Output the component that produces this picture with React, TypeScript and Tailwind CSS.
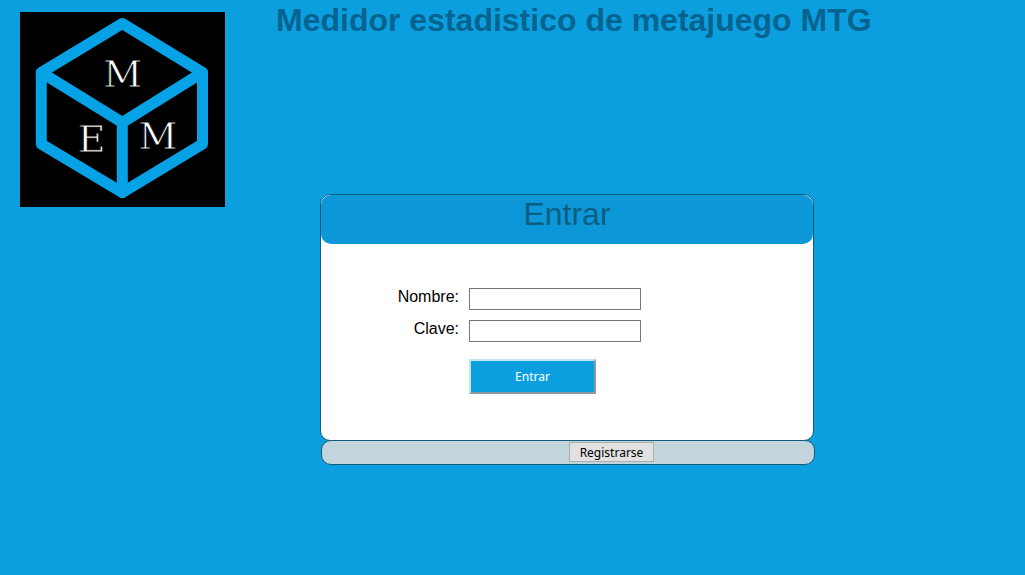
import React from "react";

function Logo() {
  return (
    <svg
      className="h-[195px] w-[205px] shrink-0 bg-black"
      viewBox="0 0 205 195"
      role="img"
      aria-label="MEM"
    >
      <g fill="none" stroke="#06a2e6" strokeWidth="11" strokeLinejoin="round" strokeLinecap="round">
        <path d="M102.3 11.5 182.5 60.5V132L102.3 180.5 21.3 132V60.5Z" />
        <path d="M21.3 60.5 102.3 110.5 182.5 60.5M102.3 110.5V180.5" />
      </g>
      <g
        fill="#ffffff"
        stroke="#000000"
        strokeWidth="0.8"
        fontSize="38"
        textAnchor="middle"
        className="font-['DejaVu_Serif',serif]"
      >
        <text x="102.7" y="74.5">M</text>
        <text x="71.5" y="140">E</text>
        <text x="138" y="137">M</text>
      </g>
    </svg>
  );
}

type FieldProps = { id: string; label: string; type: string };

function Field({ id, label, type }: FieldProps) {
  return (
    <div className="flex items-start gap-[10px]">
      <label htmlFor={id} className="w-[138px] text-right text-base leading-[18px]">
        {label}
      </label>
      <input
        id={id}
        name={id}
        type={type}
        className="h-[22px] w-[172px] border border-[#767676] bg-white px-1 text-[13px]"
      />
    </div>
  );
}

export default function App() {
  return (
    <div className="flex min-h-screen items-start gap-[51px] bg-[#0c9fe0] px-5 font-['Liberation_Sans',Arial,sans-serif] text-black">
      <div className="pt-3">
        <Logo />
      </div>
      <main className="min-w-0 flex-1">
        <h1 className="pt-[2px] text-[32px] leading-9 font-bold text-[#04648f]">
          Medidor estadistico de metajuego MTG
        </h1>
        <div className="mt-[156px] ml-11 max-w-[495px]">
          <form
            className="mr-px rounded-[10px] border border-[#135a78] bg-white pb-[46px]"
            onSubmit={(event) => event.preventDefault()}
          >
            <h2 className="h-[49px] rounded-[10px] bg-[#0b97d8] text-center text-[32px] leading-[38px] text-[#0b5e80]">
              Entrar
            </h2>
            <div className="mt-11 flex flex-col gap-[10px]">
              <Field id="nombre" label="Nombre:" type="text" />
              <Field id="clave" label="Clave:" type="password" />
            </div>
            <button
              type="submit"
              className="mt-[17px] ml-[148px] block h-[35px] w-[127px] border-2 border-t-[#c5e4f2] border-r-[#8e989e] border-b-[#8e989e] border-l-[#c5e4f2] bg-[#0c9fe0] font-['Noto_Sans',sans-serif] text-xs text-white"
            >
              Entrar
            </button>
          </form>
          <footer className="-mt-px ml-px flex h-[25px] items-start justify-center rounded-[10px] border border-[#135a78] bg-[#c3d5dc] pt-px pl-[87px]">
            <button
              type="button"
              className="h-5 w-[85px] border border-[#adadad] bg-[#e1e1e1] pt-px font-['Noto_Sans',sans-serif] text-xs leading-4"
            >
              Registrarse
            </button>
          </footer>
        </div>
      </main>
    </div>
  );
}
